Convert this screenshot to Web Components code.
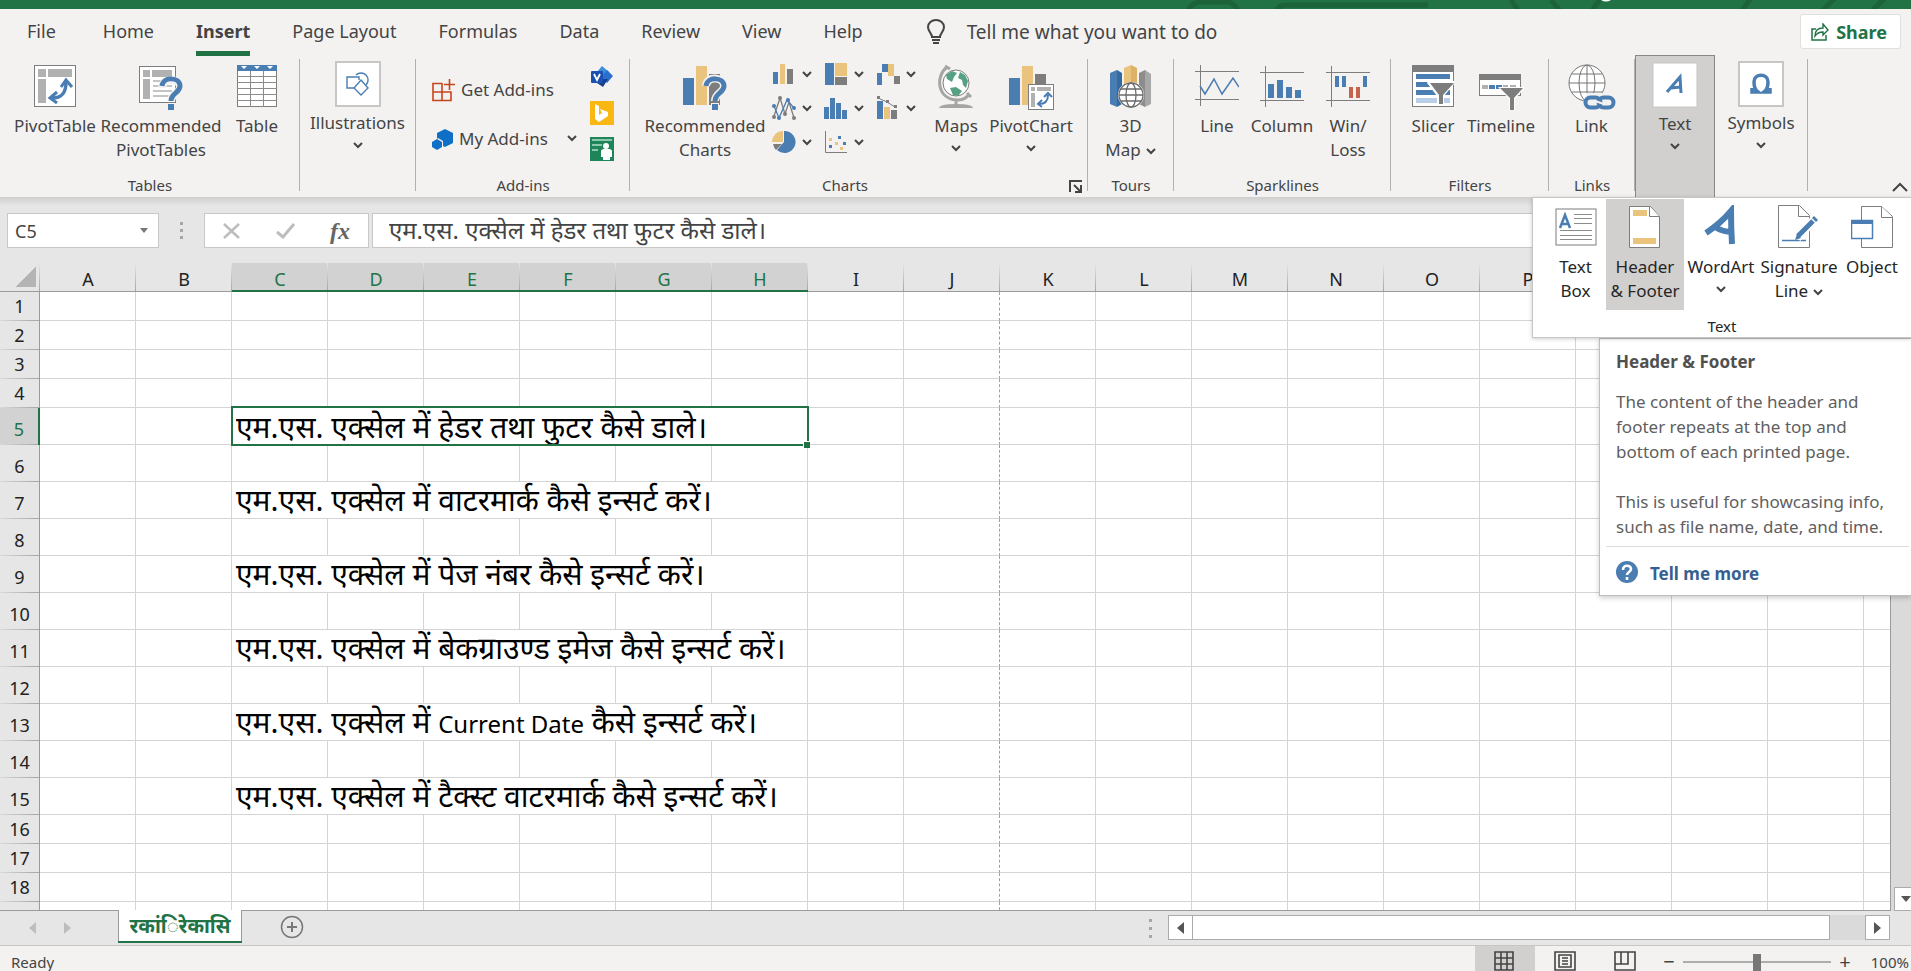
<!DOCTYPE html>
<html lang="en">
<head>
<meta charset="utf-8">
<title>Excel</title>
<style>
  html, body { margin: 0; height: 100%; overflow: hidden; }
  body { font-family: "Noto Sans", "Open Sans", "Noto Sans Devanagari", sans-serif; font-size: 17px; color: #444; background: #e6e6e6; }
</style>
</head>
<body>
<excel-app></excel-app>
<script>
const BLUE = '#4a7db1', TAN = '#eac47d', GREY = '#7d7d7d';

// name: [width, height, markup]
const ICONS = {
  chevron: [10, 7, '<path d="M1 1l4 4 4-4" fill="none" stroke="#444" stroke-width="2"/>'],
  collapse: [16, 10, '<path d="M1 9l7-7 7 7" fill="none" stroke="#444" stroke-width="2"/>'],
  launcher: [14, 13, '<path d="M1 12V1h12M5 5l6 6M12 5v7H6" fill="none" stroke="#444" stroke-width="2"/>'],
  bulb: [20, 26, '<path d="M6 18c0-4-4-5-4-10a8 7 0 0 1 16 0c0 5-4 6-4 10zM6 21h8M7 24h6" fill="none" stroke="#444" stroke-width="2"/>'],
  share: [18, 18, '<path d="M5 6H1v11h14v-5" fill="none" stroke="#217346" stroke-width="1.5"/><path d="M4 13c0-5 3-8 8-8V1l5 6-5 5V9c-4 0-6 1-8 4z" fill="none" stroke="#217346" stroke-width="1.4"/>'],
  pivot: [44, 46, `<rect x="1.500" y="1.500" width="41" height="41" fill="#fff" stroke="${GREY}"/><path d="M5 5h8v8H5zM15 5h24v8H15zM5 15h8v24H5z" fill="#b1b1b1"/>
    <path d="M19 34c10 0 14-5 14-16" fill="none" stroke="${BLUE}" stroke-width="3.500"/><path d="M28 23l5-7 6 7M24 28l-7 6 7 5" fill="none" stroke="${BLUE}" stroke-width="3"/>`],
  recPivot: [46, 46, `<rect x="1.500" y="2.500" width="36" height="36" fill="#fff" stroke="${GREY}"/><path d="M5 6h7v7H5zM14 6h20v7H14zM5 15h7v20H5z" fill="#b1b1b1"/><path d="M15 17h19M15 22h19M15 27h19M15 32h19" stroke="#c4c4c4" stroke-width="2"/>
    <path d="M24 24c0-11 18-10 18-1 0 7-9 6-9 14" fill="none" stroke="#f3f2f1" stroke-width="8"/><path d="M24 22c1-10 18-9 18 0 0 7-9 7-9 15" fill="none" stroke="${BLUE}" stroke-width="5"/><path d="M30 40h6v6h-6z" fill="${BLUE}"/>`],
  table: [42, 46, `<rect x="1.500" y="1.500" width="39" height="41" fill="#fff" stroke="${GREY}"/><path d="M1 1h40v6H1z" fill="${BLUE}"/><path d="M5 2h6l-3 3zM18 2h6l-3 3zM31 2h6l-3 3z" fill="#fff"/><path d="M1 12.500h40M1 18.500h40M1 24.500h40M1 30.500h40M1 36.500h40M14.500 7v36M27.500 7v36" stroke="#8c8c8c"/>`],
  shapes: [46, 46, `<rect x="1" y="1" width="44" height="44" fill="#fff" stroke="#c8c6c4" stroke-width="2"/><path d="M21 27h-9V16h12v3M21 14a7 7 0 1 1 10 10" fill="none" stroke="${BLUE}" stroke-width="1.400"/><path d="M26 19l7 8-7 7-7-7z" fill="#fff" stroke="${BLUE}" stroke-width="1.400"/>`],
  getAddins: [24, 24, '<path d="M10 5.500H1v17h18V14H1M10 5v17M19 14v8M17.500 1v11M12 6.500h11" fill="none" stroke="#c8441b" stroke-width="1.600"/>'],
  myAddins: [22, 22, '<path d="M13 1l8 4v10l-8 4-2-1v-5l-5-3-1 1V5z" fill="#0f6fc6"/><path d="M5 11l5 3v5l-5 3-5-3v-5z" fill="#0f6fc6"/>'],
  visio: [24, 24, '<path d="M12 1l7 6-5 5-7-5z" fill="#3b8ee0"/><path d="M17 5l6 6-6 7-6-6z" fill="#2b6fce"/><path d="M7 14h11l-5 8-6-4z" fill="#14408f"/><rect x="1" y="6" width="12" height="12" rx="1" fill="#1b4fb0"/><path d="M4 9l3 6 3-6" fill="none" stroke="#fff" stroke-width="1.800"/>'],
  bing: [24, 24, '<path d="M0 0h24v24H0z" fill="#f8b713"/><path d="M5 3l4 2v9l3-2-2-4 8 3v4l-9 6-4-3z" fill="#fff"/>'],
  people: [24, 24, '<path d="M0 0h24v24H0z" fill="#1e8459"/><path d="M2 3h20M2 8h10M2 13h6" stroke="#8fc7ad" stroke-width="2"/><circle cx="16" cy="9" r="3" fill="#fff"/><path d="M11 14c0-3 11-3 11 0v6h-2v3h-7v-3h-2z" fill="#fff"/>'],
  recChart: [46, 46, `<path d="M1 14h11v27H1z" fill="${BLUE}"/><path d="M14 2h11v39H14z" fill="${TAN}"/><path d="M27 10h11v31H27z" fill="${GREY}"/>
    <path d="M24 22c1-11 18-9 18 0 0 7-9 7-9 15" fill="none" stroke="#f3f2f1" stroke-width="8"/><path d="M24 22c1-10 18-9 18 0 0 7-9 7-9 15" fill="none" stroke="${BLUE}" stroke-width="5"/><path d="M29 39h8v7h-8z" fill="#f3f2f1"/><path d="M30 40h6v6h-6z" fill="${BLUE}"/>`],
  bar: [22, 22, `<path d="M1 9h5v12H1z" fill="${BLUE}"/><path d="M8 1h5v20H8z" fill="${TAN}"/><path d="M15 6h6v15h-6z" fill="${GREY}"/>`],
  tree: [24, 24, `<path d="M1 1h9v22H1z" fill="${BLUE}"/><path d="M11 1h12v13H11z" fill="${TAN}"/><path d="M11 15h12v8H11z" fill="${GREY}"/>`],
  fall: [24, 22, `<path d="M1 10h5v12H1zM6 1h7v8H6z" fill="${BLUE}"/><path d="M12 1h6v12h-6z" fill="${TAN}"/><path d="M18 13h6v8h-6z" fill="${GREY}"/>`],
  lines: [24, 24, `<path d="M2 20L8 2l5 16 4-12 5 16" fill="none" stroke="${GREY}" stroke-width="1.300"/><path d="M2 10l5 12 8-18 7 8" fill="none" stroke="${BLUE}" stroke-width="1.300"/><g fill="${BLUE}"><circle cx="2" cy="10" r="2"/><circle cx="7" cy="22" r="2"/><circle cx="16" cy="4" r="2"/><circle cx="22" cy="12" r="2"/></g><g fill="${GREY}"><circle cx="8" cy="2" r="2"/><circle cx="2" cy="21" r="2"/><circle cx="13" cy="18" r="2"/><circle cx="22" cy="22" r="2"/></g>`],
  histo: [24, 22, `<path d="M0 10h5v12H0zM6 1h5v21H6zM12 6h5v16h-5zM18 13h5v9h-5z" fill="${BLUE}"/>`],
  combo: [22, 24, `<path d="M1 5h6v18H1z" fill="${BLUE}"/><path d="M8 11h6v12H8z" fill="${TAN}"/><path d="M15 14h6v9h-6z" fill="${GREY}"/><path d="M2 2l9 4 8 5" fill="none" stroke="${GREY}"/><path d="M1 0h3v3H1zM10 4h3v3h-3zM18 9h3v3h-3z" fill="${GREY}"/>`],
  pie: [24, 24, `<path d="M12 1a11 11 0 1 1-7 19l7-8z" fill="${BLUE}"/><path d="M11 1v11H0A11 11 0 0 1 11 1z" fill="${TAN}"/><path d="M1 14h9l-6 6q-2-2-3-6z" fill="${GREY}"/>`],
  scatter: [24, 24, `<path d="M1.500 1v21.500H23" fill="none" stroke="${GREY}"/><path d="M5 15h3v3H5zM14 6h3v3h-3zM19 12h3v3h-3z" fill="${BLUE}"/><path d="M5 8h3v3H5zM11 12h3v3h-3zM16 17h3v3h-3z" fill="${TAN}"/>`],
  globe: [36, 46, `<circle cx="18" cy="19" r="13" fill="#fff" stroke="${GREY}"/><path d="M8 11l6-4 5 2-3 4-2 5-5-3zM22 8l5 3 3 6-2 7-3-3-1-5-4-2zM12 24l6-1 6 4-4 5-5-1z" fill="#55a184"/><path d="M9 3C-3 12-1 36 20 36c6 0 9-3 12-6M7 2l5 3M29 29l4 4M18 36v5" fill="none" stroke="#a5a5a5" stroke-width="3"/><path d="M1 44q1-4 17-4t17 4z" fill="#a5a5a5"/>`],
  pivotChart: [46, 46, `<path d="M1 14h11v27H1z" fill="${BLUE}"/><path d="M14 2h11v39H14z" fill="${TAN}"/><path d="M27 10h11v12H27z" fill="${GREY}"/><rect x="20.500" y="20.500" width="25" height="25" fill="#fff" stroke="${GREY}"/><path d="M23 23h4v4h-4zM29 23h14v4H29zM23 29h4v14h-4z" fill="#b1b1b1"/><path d="M31 40c6 0 9-3 9-9" fill="none" stroke="${BLUE}" stroke-width="2"/><path d="M36 33l4-4 4 4M34 36l-4 4 4 3" fill="none" stroke="${BLUE}" stroke-width="2"/>`],
  map3d: [44, 46, `<path d="M1 9l7-3v37l-7-3z" fill="${BLUE}"/><path d="M8 6l5 3v31l-5 3z" fill="#356a9f"/><path d="M15 4l7-3v24h-7z" fill="${TAN}"/><path d="M22 1l6 3v21h-6z" fill="#dcb266"/><path d="M30 9l6-3v37l-6-3z" fill="#8c8c8c"/><path d="M36 6l6 4v30l-6 3z" fill="#a8a8a8"/><circle cx="22" cy="31" r="13" fill="#fff"/><g fill="none" stroke="#6b6b6b" stroke-width="1.300"><circle cx="22" cy="31" r="12"/><ellipse cx="22" cy="31" rx="5" ry="12"/><path d="M10 31h24M12 25h20M12 37h20"/></g>`],
  spLine: [44, 46, `<path d="M0 7.500h44M0 35.500h44M5.500 1v41" stroke="${GREY}"/><path d="M5 22l5 8 9-15 8 15 11-16 6 9" fill="none" stroke="${BLUE}" stroke-width="1.500"/>`],
  spColumn: [44, 46, `<path d="M0 8.500h44M0 36.500h44M5.500 2v41" stroke="${GREY}"/><path d="M8 20h6v14H8zM17 16h6v18h-6zM26 23h6v11h-6zM35 26h6v8h-6z" fill="${BLUE}"/>`],
  spWin: [44, 46, `<path d="M0 8.500h44M0 36.500h44M5.500 2v41" stroke="${GREY}"/><path d="M9 12h4v11H9zM16 12h4v11h-4zM37 12h4v11h-4z" fill="${BLUE}"/><path d="M23 23h4v11h-4zM30 23h4v11h-4z" fill="#c5634b"/>`],
  slicer: [44, 46, `<rect x="1.500" y="1.500" width="41" height="41" fill="#fff" stroke="${GREY}"/><path d="M1 1h42v7H1z" fill="${GREY}"/><path d="M5 10h34v5H5zM5 18h34v5H5zM5 26h34v5H5z" fill="${BLUE}"/><path d="M5 34h34v5H5z" fill="#b9cfe8"/><path d="M17 17h26v3l-10 12v9h-7v-9L16 19z" fill="#fff"/><path d="M19 19h24L32 31v9h-4v-9z" fill="${GREY}"/>`],
  timeline: [46, 46, `<rect x="1.500" y="10.500" width="41" height="21" fill="#fff" stroke="${GREY}"/><path d="M1 10h42v6H1z" fill="${GREY}"/><path d="M4 21h6v4H4zM25 21h5v4h-5zM32 21h6v4h-6z" fill="#b1b1b1"/><path d="M11 21h6v4h-6zM18 21h6v4h-6z" fill="${BLUE}"/><path d="M20 23h26v2L37 35v11h-6V35z" fill="#fff"/><path d="M22 24h23l-9 10v12h-4V34z" fill="${GREY}"/>`],
  link: [48, 46, `<circle cx="19" cy="19" r="18" fill="#fff"/><g fill="none" stroke="#777"><circle cx="19" cy="19" r="18"/><ellipse cx="19" cy="19" rx="8" ry="18"/><path d="M1 19h36M4 10h30M4 28h30M19 1v36"/></g><path d="M22 33h18v11H22z" fill="none" stroke="#f3f2f1" stroke-width="8"/><rect x="17.500" y="33.500" width="15" height="10" rx="5" fill="none" stroke="${BLUE}" stroke-width="4"/><rect x="30.500" y="33.500" width="15" height="10" rx="5" fill="none" stroke="${BLUE}" stroke-width="4"/><path d="M27 37l9 3" stroke="#f3f2f1" stroke-width="2"/>`],
  textBox: [46, 46, `<rect x="1" y="1" width="44" height="44" fill="#fff" stroke="#c8c6c4"/><path d="M15 30l13-15 1 16M19 26l10-1" fill="none" stroke="${BLUE}" stroke-width="3"/>`],
  omega: [46, 46, `<rect x="1" y="1" width="44" height="44" fill="#fff" stroke="#c8c6c4" stroke-width="2"/><path d="M14 27v4h6q-4-3-4-10c0-9 14-9 14 0q0 7-4 10h6v-4" fill="none" stroke="${BLUE}" stroke-width="3.500"/>`],
  box: [42, 46, `<rect x="1" y="4" width="40" height="36" fill="#fff" stroke="${GREY}"/><path d="M5 23l5-13 5 13M7 19h7" fill="none" stroke="${BLUE}" stroke-width="2.500"/><path d="M19 9.500h18M19 13.500h18M19 18.500h18M5 25.500h32M5 30.500h32M5 34.500h32" stroke="#8c8c8c"/>`],
  header: [32, 46, `<path d="M.5 1.500h21l9 10v31H.5z" fill="#fff" stroke="${GREY}"/><path d="M20.500 1.500v10h10" fill="#fff" stroke="${GREY}"/><path d="M4 5h14v6H4zM4 33h23v6H4z" fill="${TAN}"/>`],
  wordArt: [34, 46, `<path d="M2 28Q17 18 27 6q0 16 1 33M11 22q8 5 17 5" fill="none" stroke="${BLUE}" stroke-width="6"/>`],
  signature: [42, 46, `<path d="M.5.500h21l10 10v32H.5z" fill="#fff" stroke="${GREY}"/><path d="M20.500.500v11h11" fill="#fff" stroke="${GREY}"/><path d="M4 35.500h24" stroke="${BLUE}" stroke-width="1.500"/><path d="M19 33l17-18" stroke="#fff" stroke-width="9"/><path d="M20 31l15-15" stroke="${BLUE}" stroke-width="5"/><path d="M17 35l2-6 4 4zM34 13l2-2 4 4-2 2z" fill="${BLUE}"/>`],
  object: [42, 46, `<path d="M10.500 1.500h20l11 10v31h-31z" fill="#fff" stroke="${GREY}"/><path d="M30.500 1.500v11h11" fill="#fff" stroke="${GREY}"/><rect x=".5" y="15.500" width="21" height="18" fill="#fff" stroke="${BLUE}" stroke-width="1.500"/><path d="M0 15h22v4H0z" fill="${BLUE}"/>`],
  help: [22, 22, `<circle cx="11" cy="11" r="11" fill="${BLUE}"/><path d="M7 9c0-6 8-5 8-1 0 3-4 3-4 6M11 16v3" fill="none" stroke="#fff" stroke-width="2.600"/>`],
  cancel: [18, 16, '<path d="M1 1l15 14M16 1L1 15" stroke="#bdbdbd" stroke-width="2.500"/>'],
  accept: [20, 16, '<path d="M1 9l6 5L18 1" fill="none" stroke="#bdbdbd" stroke-width="3"/>'],
  plus: [24, 24, '<circle cx="12" cy="12" r="10.500" fill="none" stroke="#777" stroke-width="1.500"/><path d="M12 7v10M7 12h10" stroke="#777" stroke-width="2"/>'],
  left: [7, 12, '<path d="M7 0v12L0 6z" fill="currentColor"/>'],
  right: [7, 12, '<path d="M0 0v12l7-6z" fill="currentColor"/>'],
  down: [10, 6, '<path d="M0 0h10L5 6z" fill="currentColor"/>'],
  drop: [8, 5, '<path d="M0 0h8L4 5z" fill="currentColor"/>'],
  normalView: [20, 20, '<path d="M1 1h18v18H1zM7 1v18M13 1v18M1 7h18M1 13h18" fill="none" stroke="#444" stroke-width="1.600"/>'],
  pageView: [22, 20, '<path d="M1 1h20v18H1zM5 4h12v12H5zM8 7h6M8 10h6M8 13h6" fill="none" stroke="#444" stroke-width="1.600"/>'],
  breakView: [22, 20, '<path d="M1 1h20v18H1zM1 13h13V1M7 1v12" fill="none" stroke="#444" stroke-width="1.600"/>'],
};

const RESET = `
  :host, *, *::before, *::after { box-sizing: border-box; }
  button { font: inherit; color: inherit; background: none; border: 0; padding: 0; margin: 0; }
  input { font: inherit; color: inherit; border: 0; padding: 0; margin: 0; outline: 0; }
`;

function define(name, html, setup) {
  const template = document.createElement('template');
  template.innerHTML = html;
  customElements.define(name, class extends HTMLElement {
    constructor() {
      super();
      this.attachShadow({ mode: 'open' }).appendChild(template.content.cloneNode(true));
    }
    connectedCallback() {
      if (setup) setup.call(this, this.shadowRoot);
    }
  });
}

define('x-icon', '<style>:host{display:block;flex:none}svg{display:block}</style><svg aria-hidden="true"></svg>', function (root) {
  const [w, h, body] = ICONS[this.getAttribute('name')];
  const svg = root.querySelector('svg');
  svg.setAttribute('width', w);
  svg.setAttribute('height', h);
  svg.setAttribute('viewBox', `0 0 ${w} ${h}`);
  svg.innerHTML = body;
});

// Large ribbon button. chevron="below" | "inline"; the label is slotted.
define('ribbon-button', `<style>${RESET}
  :host { display: block; flex: none; width: var(--w, 80px); --pad: 9px; }
  :host([compact]) { --pad: 6px; }
  :host([pressed]) { background: #d2d0ce; }
  button { display: flex; flex-direction: column; align-items: center; width: 100%; height: 100%; padding-top: var(--pad); line-height: 24px; white-space: nowrap; }
  .pic { height: 46px; margin-bottom: 4px; }
  .label { text-align: center; }
  .below { padding: 7px 0; }
  .inline { display: inline-block; margin-left: 5px; vertical-align: middle; }
</style>
<button type="button"><span class="pic"></span><span class="label"><slot></slot></span></button>`, function (root) {
  root.querySelector('.pic').innerHTML = `<x-icon name="${this.getAttribute('icon')}"></x-icon>`;
  const chevron = this.getAttribute('chevron');
  if (!chevron) return;
  const icon = document.createElement('x-icon');
  icon.setAttribute('name', 'chevron');
  icon.className = chevron;
  root.querySelector(chevron === 'below' ? 'button' : '.label').append(icon);
});

define('ribbon-group', `<style>${RESET}
  :host { display: flex; flex-direction: column; flex: none; width: var(--w); height: 142px; background: linear-gradient(#b3b0ad, #b3b0ad) right 4px / 1px 132px no-repeat; }
  :host([open]) { background: #d2d0ce; border: 1px solid #8a8886; border-bottom: 0; }
  .body { flex: 1; display: flex; padding-left: var(--left, 0); }
  .foot { display: flex; height: 22px; font-size: 15px; line-height: 20px; }
  .name { flex: 1; text-align: center; }
</style>
<div class="body"><slot></slot></div><div class="foot"><div class="name"></div><slot name="corner"></slot></div>`, function (root) {
  root.querySelector('.name').textContent = this.getAttribute('name') || '';
});

define('title-strip', `<style>
  :host { display: block; height: 9px; background: #217346; }
  svg { display: block; margin-left: auto; }
</style>
<svg width="740" height="9" viewBox="0 0 740 9" aria-hidden="true"><g fill="none" stroke="#1c6339" stroke-width="5"><path d="M16 12q5-9 12-10h30q6 2 10 10M105 12q2-8 12-7h140M348 12l-8-12M380 0l10 12h30l10-14M570 12l10-14M650 12l14-14M700 12l14-14"/></g><path d="M430 0h10q-5 3-10 0z" fill="#fff"/></svg>`);

define('ribbon-tabs', `<style>${RESET}
  :host { display: flex; align-items: flex-start; height: 46px; padding: 5px 10px 0 27px; font-size: 18px; }
  nav { display: flex; gap: 42px; }
  nav button { display: block; line-height: 34px; height: 37px; padding-bottom: 3px; }
  nav button[aria-current] { font-weight: 700; box-shadow: 0 5px #217346; }
  nav button:first-child { margin-right: 5px; }
  .tell { display: flex; align-items: center; gap: 21px; height: 36px; margin-left: 63px; font-size: 19px; }
  .share { margin-left: auto; display: flex; align-items: center; gap: 7px; height: 35px; padding: 0 13px 0 10px; background: #fff; border: 1px solid #e1dfdd; border-radius: 3px; color: #217346; font-weight: 700; }
</style>
<nav>
  <button type="button">File</button><button type="button">Home</button><button type="button" aria-current="page">Insert</button><button type="button">Page Layout</button><button type="button">Formulas</button><button type="button">Data</button><button type="button">Review</button><button type="button">View</button><button type="button">Help</button>
</nav>
<button type="button" class="tell"><x-icon name="bulb"></x-icon>Tell me what you want to do</button>
<button type="button" class="share"><x-icon name="share"></x-icon>Share</button>`);

define('ribbon-panel', `<style>${RESET}
  :host { display: flex; position: relative; height: 142px; }
  .addins { display: grid; grid-template-columns: 1fr 24px; padding: 10px 16px 0 16px; width: 100%; }
  .addins > div { display: flex; flex-direction: column; }
  .addins button { display: flex; align-items: center; gap: 5px; white-space: nowrap; }
  .wide { height: 49px; }
  .wide x-icon:last-child:not(:first-child) { margin-left: 14px; }
  .apps { gap: 12px; }
  .charts { display: grid; grid-template-columns: repeat(3, 52px); grid-auto-rows: 34px; padding: 2px 0 0 4px; align-content: start; width: 160px; }
  .charts button { display: flex; align-items: center; gap: 6px; }
  .charts button x-icon:first-child { width: 24px; }
  .launcher { width: 28px; padding-left: 9px; }
  .collapse { margin: auto 3px 5px auto; }
</style>
<ribbon-group name="Tables" style="--w:300px;--left:12px">
  <ribbon-button icon="pivot" style="--w:86px">PivotTable</ribbon-button>
  <ribbon-button icon="recPivot" style="--w:126px">Recommended<br>PivotTables</ribbon-button>
  <ribbon-button icon="table" style="--w:66px">Table</ribbon-button>
</ribbon-group>
<ribbon-group style="--w:116px"><ribbon-button compact icon="shapes" chevron="below" style="--w:115px">Illustrations</ribbon-button></ribbon-group>
<ribbon-group name="Add-ins" style="--w:214px">
  <div class="addins">
    <div><button type="button" class="wide"><x-icon name="getAddins"></x-icon>Get Add-ins</button><button type="button" class="wide"><x-icon name="myAddins"></x-icon>My Add-ins<x-icon name="chevron"></x-icon></button></div>
    <div class="apps"><button type="button" aria-label="Visio"><x-icon name="visio"></x-icon></button><button type="button" aria-label="Bing Maps"><x-icon name="bing"></x-icon></button><button type="button" aria-label="People Graph"><x-icon name="people"></x-icon></button></div>
  </div>
</ribbon-group>
<ribbon-group name="Charts" style="--w:458px;--left:12px">
  <ribbon-button icon="recChart" style="--w:126px">Recommended<br>Charts</ribbon-button>
  <div class="charts"></div>
  <ribbon-button icon="globe" chevron="below" style="--w:56px">Maps</ribbon-button>
  <ribbon-button icon="pivotChart" chevron="below" style="--w:94px">PivotChart</ribbon-button>
  <button type="button" class="launcher" slot="corner" aria-label="Charts settings"><x-icon name="launcher"></x-icon></button>
</ribbon-group>
<ribbon-group name="Tours" style="--w:86px"><ribbon-button icon="map3d" chevron="inline" style="--w:85px">3D<br>Map</ribbon-button></ribbon-group>
<ribbon-group name="Sparklines" style="--w:217px;--left:12px">
  <ribbon-button icon="spLine" style="--w:62px">Line</ribbon-button>
  <ribbon-button icon="spColumn" style="--w:68px">Column</ribbon-button>
  <ribbon-button icon="spWin" style="--w:64px">Win/<br>Loss</ribbon-button>
</ribbon-group>
<ribbon-group name="Filters" style="--w:158px;--left:12px">
  <ribbon-button icon="slicer" style="--w:60px">Slicer</ribbon-button>
  <ribbon-button icon="timeline" style="--w:76px">Timeline</ribbon-button>
</ribbon-group>
<ribbon-group name="Links" style="--w:86px"><ribbon-button icon="link" style="--w:85px">Link</ribbon-button></ribbon-group>
<ribbon-group open style="--w:80px"><ribbon-button compact icon="textBox" chevron="below" style="--w:78px">Text</ribbon-button></ribbon-group>
<ribbon-group style="--w:93px"><ribbon-button compact icon="omega" chevron="below" style="--w:92px">Symbols</ribbon-button></ribbon-group>
<button type="button" class="collapse" aria-label="Collapse the ribbon"><x-icon name="collapse"></x-icon></button>`, root => {
  root.querySelector('.charts').innerHTML = ['bar', 'tree', 'fall', 'lines', 'histo', 'combo', 'pie', 'scatter']
    .map(n => `<button type="button" aria-label="${n} chart"><x-icon name="${n}"></x-icon><x-icon name="chevron"></x-icon></button>`).join('');
});

define('text-menu', `<style>${RESET}
  :host { display: block; position: absolute; z-index: 3; right: 0; top: 197px; width: 379px; color: #262626; background: #fff; border: 1px solid #c6c6c6; border-right: 0; box-shadow: 0 1px 4px rgba(0,0,0,.2); }
  .row { display: flex; height: 112px; padding: 1px 0 0 12px; }
  .name { font-size: 15px; line-height: 20px; padding: 6px 0 0; height: 27px; text-align: center; }
</style>
<div class="row">
  <ribbon-button compact icon="box" style="--w:61px">Text<br>Box</ribbon-button>
  <ribbon-button compact pressed icon="header" style="--w:78px">Header<br>&amp; Footer</ribbon-button>
  <ribbon-button compact icon="wordArt" chevron="below" style="--w:74px">WordArt</ribbon-button>
  <ribbon-button compact icon="signature" chevron="inline" style="--w:82px">Signature<br>Line</ribbon-button>
  <ribbon-button compact icon="object" style="--w:64px">Object</ribbon-button>
</div>
<div class="name">Text</div>`);

define('help-tip', `<style>${RESET}
  :host { display: block; position: absolute; z-index: 2; right: 0; top: 338px; width: 312px; height: 258px; padding: 10px 2px 0 6px; line-height: 25px; color: #606060; background: #fff; border: 1px solid #bebebe; border-right: 0; box-shadow: 0 2px 5px rgba(0,0,0,.2); }
  h2, p { margin: 0 0 15px 10px; font-size: 17px; }
  h2 { color: #505050; }
  p { margin-bottom: 25px; white-space: nowrap; }
  .more { margin: -18px 0 0; padding: 14px 0 0 10px; display: flex; gap: 12px; border-top: 1px solid #dcdcdc; }
  a { color: #36608f; font-weight: 700; text-decoration: none; }
</style>
<h2>Header &amp; Footer</h2>
<p>The content of the header and<br>footer repeats at the top and<br>bottom of each printed page.</p>
<p>This is useful for showcasing info,<br>such as file name, date, and time.</p>
<div class="more"><x-icon name="help"></x-icon><a href="#help">Tell me more</a></div>`);

define('formula-bar', `<style>${RESET}
  :host { display: flex; height: 66px; padding: 16px 0 15px 7px; background: linear-gradient(#cfcfcf, #e6e6e6 9px); }
  .cell, .tools, .formula { background: #fff; border: 1px solid #c8c8c8; }
  .cell { display: flex; align-items: center; width: 152px; padding: 0 10px 0 7px; color: #777; }
  .cell input { flex: 1; min-width: 0; font-size: 18px; color: #444; background: none; }
  .dots { width: 45px; display: grid; place-content: center; gap: 4px; }
  .dots i { width: 3px; height: 3px; background: #a6a6a6; }
  .tools { display: flex; align-items: center; justify-content: space-between; width: 165px; margin-right: 3px; padding: 0 18px 0 18px; }
  .fx { font: italic bold 24px/30px "Liberation Serif", serif; color: #666; }
  .formula { flex: 1; min-width: 0; padding: 0 16px 2px; font-size: 24px; border-right: 0; }
</style>
<div class="cell"><input aria-label="Name box" value="C5"><x-icon name="drop"></x-icon></div>
<div class="dots"><i></i><i></i><i></i></div>
<div class="tools"><button type="button" aria-label="Cancel"><x-icon name="cancel"></x-icon></button><button type="button" aria-label="Enter"><x-icon name="accept"></x-icon></button><button type="button" class="fx">fx</button></div>
<input class="formula" aria-label="Formula bar" value="एम.एस. एक्सेल में हेडर तथा फुटर कैसे डाले।">`);

const COLS = 'ABCDEFGHIJKLMNOPQRST'.split('');
const CELLS = {
  5: 'एम.एस. एक्सेल में हेडर तथा फुटर कैसे डाले।',
  7: 'एम.एस. एक्सेल में वाटरमार्क कैसे इन्सर्ट करें।',
  9: 'एम.एस. एक्सेल में पेज नंबर कैसे इन्सर्ट करें।',
  11: 'एम.एस. एक्सेल में बेकग्राउण्ड इमेज कैसे इन्सर्ट करें।',
  13: 'एम.एस. एक्सेल में <span>Current Date</span> कैसे इन्सर्ट करें।',
  15: 'एम.एस. एक्सेल में टैक्स्ट वाटरमार्क कैसे इन्सर्ट करें।',
};

define('sheet-grid', `<style>${RESET}
  :host { display: flex; flex: 1; min-height: 0; }
  .view { flex: 1; min-width: 0; overflow: hidden; background: #fff; border-right: 1px solid #9b9b9b; border-bottom: 1px solid #9b9b9b; }
  table { border-collapse: separate; border-spacing: 0; table-layout: fixed; width: 1960px; font-size: 18px; color: #222; }
  th { padding: 0; font-weight: 400; background: #e6e6e6; line-height: 24px; }
  thead th { height: 29px; padding-top: 4px; line-height: 22px; border-bottom: 1px solid #9b9b9b; background: linear-gradient(#e6e6e6, #a6a6a6) right / 1px 100% no-repeat #e6e6e6; }
  thead th.on { background-color: #d2d2d2; color: #217346; border-bottom: 2px solid #217346; }
  thead th:first-child { background: linear-gradient(135deg, #e6e6e6 50%, #b4b4b4 50%) 16px 4px / 20px 20px no-repeat, linear-gradient(#e6e6e6, #a6a6a6) right / 1px 100% no-repeat #e6e6e6; }
  tbody th { padding-bottom: 3px; border-right: 1px solid #9b9b9b; background: linear-gradient(90deg, #d8d8d8, #a6a6a6) bottom / 100% 1px no-repeat #e6e6e6; vertical-align: bottom; }
  tr.t th { padding-bottom: 4px; }
  tbody th.on { background-color: #d2d2d2; color: #217346; border-right: 2px solid #217346; }
  tr.s { height: 29px; }
  tr.t { height: 37px; }
  td { padding: 0; border-right: 1px solid #d4d4d4; border-bottom: 1px solid #d4d4d4; }
  td.brk { border-right: 1px dashed #a0a0a0; }
  td.text { padding-left: 4px; color: #000; font-size: 30px; line-height: 36px; white-space: nowrap; }
  td.text div { height: 36px; }
  td.text span { font-size: 24px; }
  td.sel { position: relative; }
  td.sel div { height: 35px; overflow: hidden; }
  td.sel::before { content: ""; position: absolute; inset: -2px -2px -2px -1px; border: 2px solid #217346; }
  td.sel::after { content: ""; position: absolute; right: -3px; bottom: -4px; width: 7px; height: 7px; background: #217346; border: 1px solid #fff; border-width: 1px 0 0 1px; }
  .bar { width: 20px; background: #dadada; display: flex; flex-direction: column; justify-content: flex-end; padding-left: 3px; overflow: hidden; }
  .bar button { flex: none; width: 24px; height: 24px; background: #fff; border: 1px solid #ababab; padding-left: 6px; color: #555; }
</style>
<div class="view"><table><colgroup></colgroup><thead></thead><tbody></tbody></table></div>
<div class="bar"><button type="button" aria-label="Scroll down"><x-icon name="down"></x-icon></button></div>`, root => {
  root.querySelector('colgroup').innerHTML = '<col style="width:40px">' + '<col style="width:96px">'.repeat(COLS.length);
  root.querySelector('thead').innerHTML = '<tr><th></th>' + COLS.map((c, i) => `<th scope="col"${i > 1 && i < 8 ? ' class="on"' : ''}>${c}</th>`).join('') + '</tr>';
  let rows = '';
  for (let r = 1; r < 20; r++) {
    rows += `<tr class="${r > 4 && r < 16 ? 't' : 's'}"><th scope="row"${r === 5 ? ' class="on"' : ''}>${r}</th>`;
    for (let c = 0; c < COLS.length; c++) {
      if (CELLS[r] && c === 2) {
        rows += `<td colspan="6" class="text${r === 5 ? ' sel' : ''}"><div>${CELLS[r]}</div></td>`;
        c = 7;
      } else rows += c === 9 ? '<td class="brk"></td>' : '<td></td>';
    }
    rows += '</tr>';
  }
  root.querySelector('tbody').innerHTML = rows;
});

define('sheet-tabs', `<style>${RESET}
  :host { display: flex; height: 35px; padding-right: 21px; border-bottom: 1px solid #c6c6c6; background: #e6e6e6; }
  .nav { display: flex; align-items: center; gap: 28px; width: 118px; padding-left: 29px; color: #bdbdbd; }
  .tab { width: 124px; height: 31px; margin-top: -1px; background: #fff; border: 1px solid #9b9b9b; border-width: 0 1px; box-shadow: 0 2px #217346; color: #217346; font-weight: 700; font-size: 20px; line-height: 30px; white-space: nowrap; }
  .add { margin-left: 38px; padding-bottom: 2px; }
  .dots { margin-left: auto; width: 36px; display: grid; place-content: center; gap: 5px; }
  .dots i { width: 3px; height: 3px; background: #a6a6a6; }
  .scroll { display: flex; width: 722px; height: 25px; margin-top: 4px; background: #dadada; color: #555; }
  .scroll button, .thumb { background: #fff; border: 1px solid #ababab; }
  .scroll button { width: 25px; display: grid; place-content: center; }
  .thumb { width: 638px; margin: 0 auto 0 -1px; }
</style>
<div class="nav"><x-icon name="left"></x-icon><x-icon name="right"></x-icon></div>
<button type="button" class="tab">रकांिरेकासि</button>
<button type="button" class="add" aria-label="New sheet"><x-icon name="plus"></x-icon></button>
<div class="dots"><i></i><i></i><i></i></div>
<div class="scroll"><button type="button" aria-label="Scroll left"><x-icon name="left"></x-icon></button><div class="thumb"></div><button type="button" aria-label="Scroll right"><x-icon name="right"></x-icon></button></div>`);

define('status-bar', `<style>${RESET}
  :host { display: flex; height: 25px; overflow: hidden; background: #f3f2f1; font-size: 15px; line-height: 32px; }
  .ready { padding-left: 11px; margin-right: auto; }
  .views { display: flex; padding-right: 7px; }
  .view { width: 60px; height: 34px; padding: 5px 0 0 19px; display: block; }
  .view.on { background: #d2d0ce; }
  .view x-icon { margin-bottom: 9px; }
  .sign { width: 14px; height: 32px; font-size: 20px; line-height: 30px; text-align: center; }
  input { appearance: none; width: 148px; height: 34px; margin: 0 7px; background: linear-gradient(#adadad, #adadad) center 15px / 100% 2px no-repeat; }
  input::-webkit-slider-thumb { appearance: none; width: 8px; height: 17px; background: #777; margin-top: -2px; }
  output { width: 59px; padding: 0 2px 0 0; text-align: right; }
</style>
<span class="ready">Ready</span>
<div class="views">
  <button type="button" class="view on" aria-label="Normal"><x-icon name="normalView"></x-icon></button>
  <button type="button" class="view" aria-label="Page layout"><x-icon name="pageView"></x-icon></button>
  <button type="button" class="view" aria-label="Page break preview"><x-icon name="breakView"></x-icon></button>
</div>
<button type="button" class="sign" aria-label="Zoom out">−</button>
<input type="range" aria-label="Zoom" min="0" max="200" value="100">
<button type="button" class="sign" aria-label="Zoom in">+</button>
<output>100%</output>`);

define('excel-app', `<style>
  :host { display: flex; flex-direction: column; position: relative; height: 100vh; overflow: hidden; }
  header { background: #f3f2f1; }
</style>
<title-strip></title-strip>
<header><ribbon-tabs></ribbon-tabs><ribbon-panel></ribbon-panel></header>
<formula-bar></formula-bar>
<sheet-grid></sheet-grid>
<sheet-tabs></sheet-tabs>
<status-bar></status-bar>
<text-menu></text-menu>
<help-tip></help-tip>`);
</script>
</body>
</html>
